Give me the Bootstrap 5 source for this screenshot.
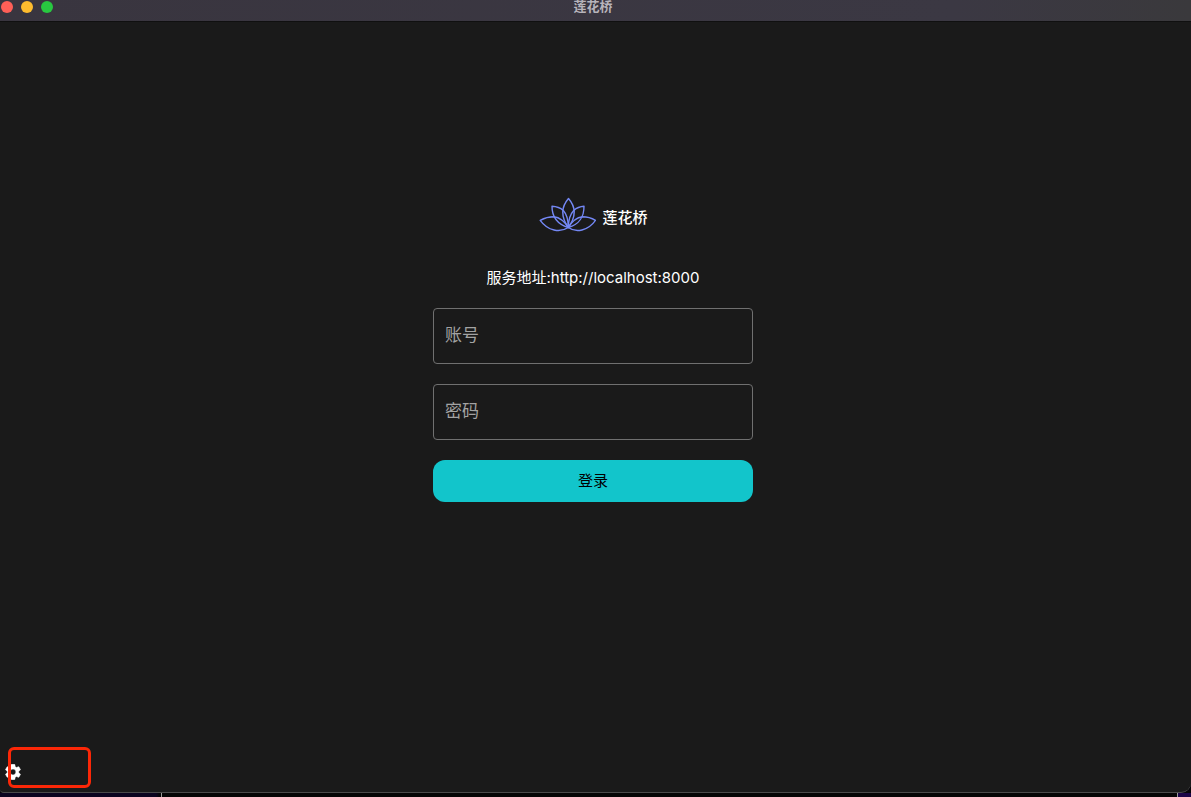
<!DOCTYPE html>
<html lang="zh-CN">
<head>
<meta charset="utf-8">
<meta name="viewport" content="width=device-width, initial-scale=1">
<title>莲花桥</title>
<link href="https://cdn.jsdelivr.net/npm/bootstrap@5.3.0/dist/css/bootstrap.min.css" rel="stylesheet">
<style>
body { background: #050408; color: #fff; font-family: Inter, "Noto Sans CJK SC", sans-serif; font-size: 15px; line-height: 20px; }
.app-window { background: #1a1a1a; border-bottom: 1px solid #4a4a4a; border-radius: 0 0 10px 4px; }
.title-bar { height: 22px; padding-right: 5px; background: linear-gradient(90deg, #39353f, #3b3843 80%, #3a393c); border-bottom: 1px solid #101010; }
.title-bar h1 { font-size: 13px; line-height: 12px; font-weight: 700; color: #b7b4bb; }
.lights { top: 1px; left: 1px; gap: 8px; }
.light { width: 12px; height: 12px; border-radius: 50%; }
.light-close { background: #ff5f57; }
.light-min { background: #febc2e; }
.light-max { background: #28c840; }
.login { padding: 175px 5px 0 0; }
.login-form { width: 320px; gap: 20px; }
.brand { gap: 6px; font-weight: 500; margin: 0 0 15px; }
.brand span { padding-top: 5px; }
.login-form .form-control { height: 56px; padding: 0 12px 2px 11px; background: transparent; border: 1px solid #707070; border-radius: 4px; color: #fff; font-size: 17px; }
.login-form .form-control::placeholder { color: #a3a3a3; opacity: 1; }
.login-form .form-control:focus { border-color: #12c5cb; box-shadow: none; }
.btn-login { height: 42px; padding: 0; background: #12c5cb; color: #000; border: 0; border-radius: 12px; font-size: 15px; }
.btn-login:hover { background: #10b2b8; color: #000; }
.settings { padding: 0 0 12px 5px; }
.settings .btn { line-height: 0; }
.highlight { left: 8px; bottom: 4px; width: 83px; height: 41px; border: 3px solid #fb2707; border-radius: 6px; pointer-events: none; }
.desktop-strip { height: 4px; background: linear-gradient(90deg, #0b0420, #0b0420 156px, #050505 160px); }
.strip-start { width: 162px; border-right: 1px solid #999; }
.strip-end { width: 14px; background: #1c0548; border-left: 1px solid #999; }
</style>
<script src="https://cdn.jsdelivr.net/npm/bootstrap@5.3.0/dist/js/bootstrap.bundle.min.js" defer></script>
</head>
<body class="min-vh-100 d-flex flex-column">
<div class="app-window flex-grow-1 d-flex flex-column position-relative">
  <header class="title-bar position-relative text-center">
    <div class="lights position-absolute d-flex">
      <span class="light light-close"></span><span class="light light-min"></span><span class="light light-max"></span>
    </div>
    <h1 class="m-0">莲花桥</h1>
  </header>
  <main class="login flex-grow-1 d-flex flex-column align-items-center">
    <form class="login-form d-flex flex-column">
      <div class="brand d-flex align-items-center justify-content-center">
        <svg width="58" height="36" viewBox="0 2 58 36" fill="none" stroke="#7488f5" stroke-width="1.4" stroke-linejoin="round" aria-hidden="true">
          <path d="M30.5 3.5C23 12 23 22 30.3 32.5C38 22 38 12 30.5 3.5Z"/>
          <path d="M25.3 15.5C22.5 13 18.5 11.5 14 11.3C14 22 18.5 29 30.3 32.5C30.3 25 29 19.5 25.3 15.5"/>
          <path d="M35.7 15.5C38.5 13 42 11.5 46 11.3C46 22 42 29 30.3 32.5C30.3 25 32 19.5 35.7 15.5"/>
          <path d="M15.8 21.8C11 21.8 6.500 23 2.2 25.3C10 36 22 38 30.3 32.5C26 25.5 21.5 22.5 15.8 21.8"/>
          <path d="M44.5 21.8C49 21.8 53.500 23 57.5 25.3C50 36 38 38 30.3 32.5C34.5 25.5 39 22.5 44.5 21.8"/>
        </svg>
        <span>莲花桥</span>
      </div>
      <div class="text-center">服务地址:http://localhost:8000</div>
      <input type="text" class="form-control" placeholder="账号" aria-label="账号" autocomplete="username">
      <input type="password" class="form-control" placeholder="密码" aria-label="密码" autocomplete="current-password">
      <button type="submit" class="btn btn-login">登录</button>
    </form>
  </main>
  <div class="settings d-flex">
    <button type="button" class="btn p-0 border-0" aria-label="设置">
      <svg width="16" height="16" viewBox="2 2 20 20" fill="#fff" stroke="#fff" stroke-width="0.6" aria-hidden="true"><path d="M19.14 12.94c.04-.3.06-.61.06-.94 0-.32-.02-.64-.07-.94l2.03-1.58c.18-.14.23-.41.12-.61l-1.92-3.32c-.12-.22-.37-.29-.59-.22l-2.39.96c-.5-.38-1.03-.7-1.62-.94l-.36-2.54c-.04-.24-.24-.41-.48-.41h-3.84c-.24 0-.43.17-.47.41l-.36 2.54c-.59.24-1.13.57-1.62.94l-2.39-.96c-.22-.08-.47 0-.59.22L2.74 8.87c-.12.21-.08.47.12.61l2.03 1.58c-.05.3-.09.63-.09.94s.02.64.07.94l-2.03 1.58c-.18.14-.23.41-.12.61l1.92 3.32c.12.22.37.29.59.22l2.39-.96c.5.38 1.03.7 1.62.94l.36 2.54c.05.24.24.41.48.41h3.84c.24 0 .44-.17.47-.41l.36-2.54c.59-.24 1.13-.56 1.62-.94l2.39.96c.22.08.47 0 .59-.22l1.92-3.32c.12-.22.07-.47-.12-.61l-2.01-1.58zM12 15.6c-1.98 0-3.6-1.62-3.6-3.6s1.62-3.6 3.6-3.6 3.6 1.62 3.6 3.6-1.62 3.6-3.6 3.6z"/></svg>
    </button>
  </div>
  <div class="highlight position-absolute"></div>
</div>
<div class="desktop-strip d-flex justify-content-between"><div class="strip-start"></div><div class="strip-end"></div></div>
</body>
</html>
